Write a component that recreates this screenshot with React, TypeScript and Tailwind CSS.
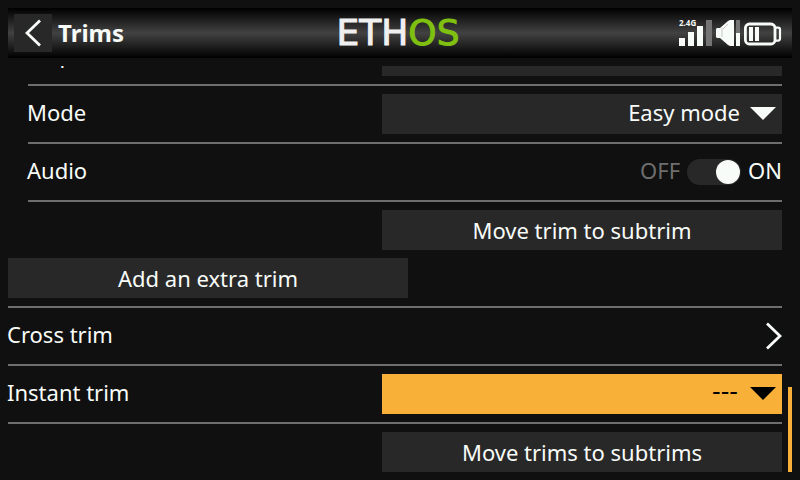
import type { ReactNode } from "react";

const fieldClass =
  "h-10 w-full appearance-none border-0 pt-0 pb-1 pl-3 text-right [text-align-last:right] outline-none";

function Button({ children }: { children: ReactNode }) {
  return (
    <button type="button" className="h-10 w-[400px] bg-[#282828] text-center">
      {children}
    </button>
  );
}

function Row({ label, htmlFor, indent, children }: { label: string; htmlFor: string; indent?: boolean; children: ReactNode }) {
  return (
    <div
      className={
        indent
          ? "ml-5 flex h-[58px] shrink-0 items-center justify-between border-b-2 border-[#6e6e6e]"
          : "flex h-[58px] shrink-0 items-center justify-between border-b-2 border-[#6e6e6e]"
      }
    >
      <label htmlFor={htmlFor} className="-ml-px pb-1">
        {label}
      </label>
      {children}
    </div>
  );
}

function Choice({ id, options, focused }: { id: string; options: string[]; focused?: boolean }) {
  return (
    <div className="relative w-[400px]">
      <select
        id={id}
        className={
          focused
            ? `${fieldClass} bg-[#f8b038] pr-11 font-['DejaVu_Sans',sans-serif] text-2xl text-black`
            : `${fieldClass} bg-[#282828] pr-[42px] text-[#f8fcf8]`
        }
      >
        {options.map((option) => (
          <option key={option}>{option}</option>
        ))}
      </select>
      <svg
        viewBox="0 0 26 13"
        className={
          focused
            ? "pointer-events-none absolute right-[6px] top-[13px] h-[13px] w-[26px] fill-black"
            : "pointer-events-none absolute right-[6px] top-[13px] h-[13px] w-[26px] fill-[#f8fcf8]"
        }
        aria-hidden="true"
      >
        <path d="M0 0H26L13 13Z" />
      </svg>
    </div>
  );
}

function StatusIcons() {
  return (
    <svg viewBox="0 0 103 28" className="h-7 w-[103px] overflow-visible" fill="#f8fcf8" aria-hidden="true">
      <text x="0" y="7" fontSize="8" fontWeight="700" fontFamily='"Open Sans", "Noto Sans", sans-serif'>
        2.4G
      </text>
      <rect x="0" y="19" width="6" height="8" />
      <rect x="9" y="13" width="6" height="14" />
      <rect x="18" y="7" width="6" height="20" />
      <rect x="27" y="1" width="6" height="26" fill="#747474" />
      <path d="M37 10L38 9H41L49 2L51 1H55V27H51L49 26L41 19H38L37 18Z" />
      <path d="M43 9V18M44 10L49 5" stroke="#c4c8c4" strokeWidth="1" fill="none" />
      <rect x="57" y="1" width="4" height="13" fill="#747474" />
      <rect x="57" y="14" width="4" height="13" />
      <rect x="66.4" y="5" width="29.6" height="20" rx="4" fill="none" stroke="#f8fcf8" strokeWidth="2.8" />
      <path d="M97 8.6H99Q101 8.6 101 10.6V19.6Q101 21.6 99 21.6H97" fill="none" stroke="#f8fcf8" strokeWidth="2.2" />
      <rect x="70" y="8" width="4" height="14" />
      <rect x="76" y="8" width="4" height="14" />
    </svg>
  );
}

export default function App() {
  return (
    <div className="flex h-screen flex-col gap-2 overflow-hidden bg-[#101010] p-2 font-['Noto_Sans','Open_Sans',sans-serif] text-[22px] leading-[30px] text-[#f8fcf8]">
      <header className="grid h-[50px] shrink-0 grid-cols-[1fr_auto_1fr] items-center bg-linear-to-b/srgb from-black via-[#424242] to-black pl-1.5 pr-2.5">
        <div className="flex items-center gap-1.5">
          <button type="button" aria-label="Back" className="flex size-[38px] items-center justify-center bg-[#282828]">
            <svg viewBox="0 0 16 28" className="h-7 w-4" fill="none" stroke="#f8fcf8" strokeWidth="2.8" aria-hidden="true">
              <path d="M15 1.5L2 14L15 26.5" />
            </svg>
          </button>
          <h1 className="text-2xl font-bold">Trims</h1>
        </div>
        <div className="font-['DejaVu_Sans',sans-serif] text-[36px] leading-[50px] text-[#f0f0f0] [-webkit-text-stroke:1px_currentColor]">
          ETH<span className="text-[#80c010]">OS</span>
        </div>
        <div className="flex justify-end">
          <StatusIcons />
        </div>
      </header>

      <div className="flex min-h-0 flex-1 gap-1.5">
        <main className="-ml-1 flex min-w-0 flex-1 flex-col justify-end overflow-hidden pl-1">
          <Row label="Step" htmlFor="step" indent>
            <Choice id="step" options={[]} />
          </Row>
          <Row label="Mode" htmlFor="mode" indent>
            <Choice id="mode" options={["Easy mode"]} />
          </Row>
          <Row label="Audio" htmlFor="audio" indent>
            <div className="flex items-center gap-[7px]">
              <span className="pb-1 text-[#6e6e6e]">OFF</span>
              <input
                id="audio"
                type="checkbox"
                role="switch"
                defaultChecked
                className="flex h-[26px] w-[54px] appearance-none items-center rounded-full bg-[#282828] px-px before:size-6 before:rounded-full before:bg-[#f8fcf8] checked:justify-end"
              />
              <span className="pb-1">ON</span>
            </div>
          </Row>
          <div className="flex shrink-0 justify-end pt-2">
            <Button>Move trim to subtrim</Button>
          </div>
          <div className="flex shrink-0 border-b-2 border-[#6e6e6e] py-2">
            <Button>Add an extra trim</Button>
          </div>
          <button
            type="button"
            className="flex h-[58px] shrink-0 items-center justify-between border-b-2 border-[#6e6e6e] text-left"
          >
            <span className="-ml-px pb-1">Cross trim</span>
            <svg viewBox="0 0 16 28" className="h-7 w-4" fill="none" stroke="#f8fcf8" strokeWidth="2.8" aria-hidden="true">
              <path d="M1 1.5L14 14L1 26.5" />
            </svg>
          </button>
          <Row label="Instant trim" htmlFor="instant">
            <Choice id="instant" options={["---"]} focused />
          </Row>
          <div className="flex shrink-0 justify-end pt-2">
            <Button>Move trims to subtrims</Button>
          </div>
        </main>
        <div className="flex w-1 flex-col justify-end">
          <div className="h-[21%] bg-[#f8b038]" />
        </div>
      </div>
    </div>
  );
}
